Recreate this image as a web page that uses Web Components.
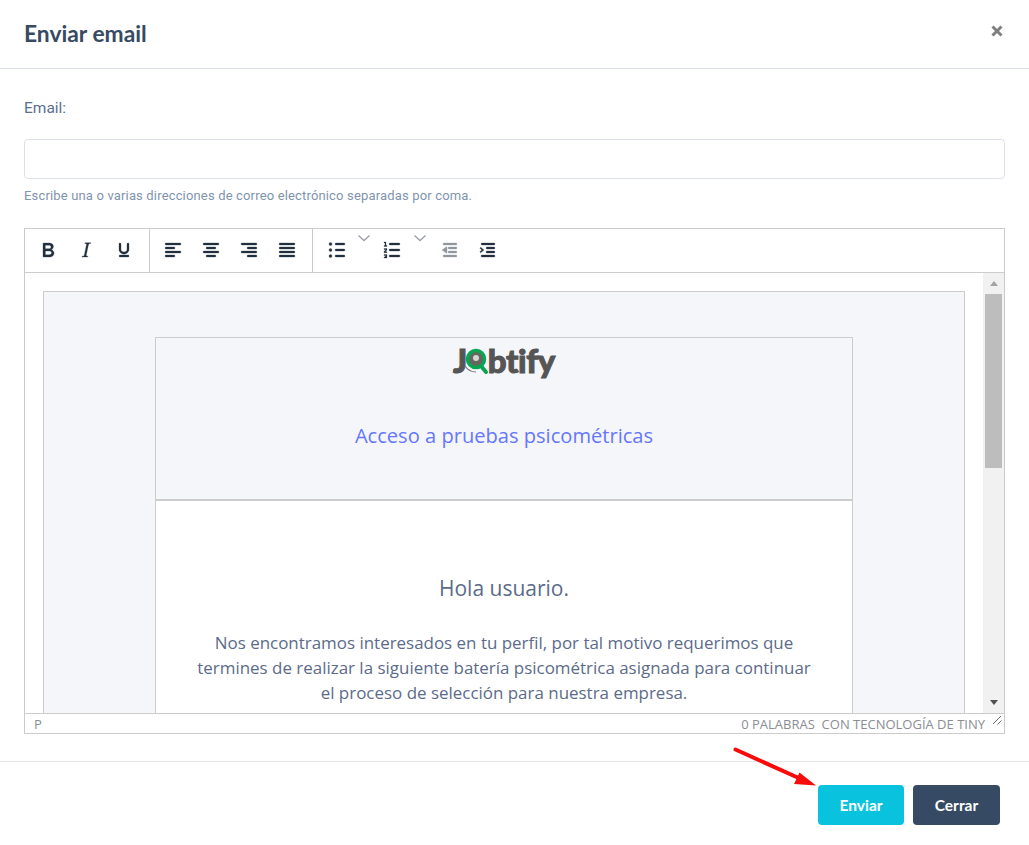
<!DOCTYPE html>
<html lang="es">
<head>
<meta charset="utf-8">
<title>Enviar email</title>
<style>
  html, body { margin: 0; background: #fff; }
  body { font-family: Roboto, "Liberation Sans", sans-serif; }
</style>
</head>
<body>
<email-modal>
  <span slot="title">Enviar email</span>
  <email-field></email-field>
  <rich-editor>
    <email-preview></email-preview>
  </rich-editor>
</email-modal>

<script>
const ICONS = {
  bold: '<path d="M7.800 19c-.3 0-.5 0-.6-.2l-.2-.5V5.700c0-.2 0-.4.2-.5l.6-.2h5c1.500 0 2.700.3 3.500 1 .7.6 1.100 1.400 1.100 2.500a3 3 0 0 1-.6 1.900c-.4.6-1 1-1.600 1.200.4.100.9.3 1.300.6s.8.7 1 1.200c.4.4.5 1 .5 1.600 0 1.300-.4 2.300-1.300 3-.8.7-2.100 1-3.800 1H7.800zm5-8.300c.6 0 1.200-.1 1.600-.5.4-.3.6-.7.6-1.300 0-1.100-.8-1.700-2.300-1.700H9.300v3.500h3.400zm.5 6c.7 0 1.300-.1 1.700-.4.4-.4.6-.9.6-1.500s-.2-1-.7-1.400c-.4-.3-1-.4-2-.4H9.400v3.800h4z"/>',
  italic: '<path d="M16.700 4.700l-.1.9h-.3c-.6 0-1 0-1.400.3-.3.3-.4.6-.5 1.100l-2.100 9.800v.6c0 .5.4.8 1.400.8h.2l-.2.8H8l.2-.8h.2c1.100 0 1.800-.5 2-1.500l2-9.800.1-.5c0-.6-.4-.8-1.400-.8h-.3l.2-.9h5.800z"/>',
  underline: '<path d="M16 5c.6 0 1 .4 1 1v5.500a4 4 0 0 1-.4 1.800l-1 1.400a5.300 5.300 0 0 1-5.500 1 5 5 0 0 1-1.600-1c-.5-.4-.8-.9-1.100-1.400a4 4 0 0 1-.4-1.800V6c0-.6.4-1 1-1s1 .4 1 1v5.500c0 .3 0 .6.2 1l.6.7a3.300 3.300 0 0 0 2.200.8 3.400 3.400 0 0 0 2.200-.8c.3-.2.4-.5.6-.8l.2-.9V6c0-.6.4-1 1-1zM8 17h8c.6 0 1 .4 1 1s-.4 1-1 1H8a1 1 0 0 1 0-2z"/>',
  left: '<path d="M5 5h14a1 1 0 0 1 0 2H5a1 1 0 1 1 0-2zm0 4h8a1 1 0 0 1 0 2H5a1 1 0 1 1 0-2zm0 8h8a1 1 0 0 1 0 2H5a1 1 0 0 1 0-2zm0-4h14a1 1 0 0 1 0 2H5a1 1 0 0 1 0-2z"/>',
  center: '<path d="M5 5h14a1 1 0 0 1 0 2H5a1 1 0 1 1 0-2zm3 4h8a1 1 0 0 1 0 2H8a1 1 0 1 1 0-2zm0 8h8a1 1 0 0 1 0 2H8a1 1 0 0 1 0-2zm-3-4h14a1 1 0 0 1 0 2H5a1 1 0 0 1 0-2z"/>',
  right: '<path d="M5 5h14a1 1 0 0 1 0 2H5a1 1 0 1 1 0-2zm6 4h8a1 1 0 0 1 0 2h-8a1 1 0 0 1 0-2zm0 8h8a1 1 0 0 1 0 2h-8a1 1 0 0 1 0-2zm-6-4h14a1 1 0 0 1 0 2H5a1 1 0 0 1 0-2z"/>',
  justify: '<path d="M5 5h14a1 1 0 0 1 0 2H5a1 1 0 1 1 0-2zm0 4h14a1 1 0 0 1 0 2H5a1 1 0 1 1 0-2zm0 4h14a1 1 0 0 1 0 2H5a1 1 0 0 1 0-2zm0 4h14a1 1 0 0 1 0 2H5a1 1 0 0 1 0-2z"/>',
  bullets: '<path d="M11 5h8a1 1 0 0 1 0 2h-8a1 1 0 0 1 0-2zm0 6h8a1 1 0 0 1 0 2h-8a1 1 0 0 1 0-2zm0 6h8a1 1 0 0 1 0 2h-8a1 1 0 0 1 0-2z"/><circle cx="5.500" cy="6" r="1.500"/><circle cx="5.500" cy="12" r="1.500"/><circle cx="5.500" cy="18" r="1.500"/>',
  numbers: '<path d="M10 17h9a1 1 0 0 1 0 2h-9a1 1 0 0 1 0-2zm0-6h9a1 1 0 0 1 0 2h-9a1 1 0 0 1 0-2zm0-6h9a1 1 0 0 1 0 2h-9a1 1 0 0 1 0-2zM6 4v3.500h1V8.500H4v-1h1V5H4V4h2zM4 10.500h3v1.600L5.300 13.700H7v1H4v-1.200L5.900 11.500H4v-1zM4 16.500h3v3.500H4v-1h2v-.3H5v-.7h1v-.5H4v-1z"/>',
  outdent: '<path d="M7 5h12a1 1 0 0 1 0 2H7a1 1 0 1 1 0-2zm5 4h7a1 1 0 0 1 0 2h-7a1 1 0 0 1 0-2zm0 4h7a1 1 0 0 1 0 2h-7a1 1 0 0 1 0-2zm-5 4h12a1 1 0 0 1 0 2H7a1 1 0 0 1 0-2zM8.500 9.400 10 8.800v6.400l-1.500-.6L5 12l3.500-2.600z"/>',
  indent: '<path d="M7 5h12a1 1 0 0 1 0 2H7a1 1 0 1 1 0-2zm5 4h7a1 1 0 0 1 0 2h-7a1 1 0 0 1 0-2zm0 4h7a1 1 0 0 1 0 2h-7a1 1 0 0 1 0-2zm-5 4h12a1 1 0 0 1 0 2H7a1 1 0 0 1 0-2zM5.700 9.300 9 12l-3.300 2.700-.9-1L7 12 4.800 10.300l.9-1z"/>'
}

customElements.define('email-modal', class extends HTMLElement {
  constructor () {
    super()
    this.attachShadow({ mode: 'open' })
    this.shadowRoot.innerHTML = `
      <style>
        :host { display: flex; flex-direction: column; width: 1029px; height: 845px; box-sizing: border-box; overflow: hidden; }
        header {
          height: 68px;
          flex: none;
          border-bottom: 1px solid #dbdfea;
          display: flex;
          align-items: center;
          justify-content: space-between;
          padding: 0 24px;
          color: #364a63;
          font: 700 22.800px/1.1 Lato, sans-serif;
        }
        header svg { display: block; margin: -6px 1px 0 0; }
        main { padding: 29px 24px 0; display: flex; flex-direction: column; height: 692px; box-sizing: border-box; flex: none; }
        footer {
          position: relative;
          flex: none;
          border-top: 1px solid #e5e5ec;
          height: 84px;
          box-sizing: border-box;
          padding: 23px 29px 0 0;
          display: flex;
          justify-content: flex-end;
          gap: 9px;
        }
        button {
          height: 40px;
          border: 0;
          border-radius: 4px;
          color: #fff;
          font: 700 15.500px Lato, sans-serif;
          padding: 0;
        }
        .send { width: 86px; background: #09c2de; }
        .close { width: 87px; background: #364a63; }
        .arrow { position: absolute; left: 730px; top: -16px; }
      </style>
      <header>
        <slot name="title"></slot>
        <svg width="14" height="14" viewBox="0 0 14 14"><path d="M2.500 2.500l9 9m0-9l-9 9" stroke="#7f7f7f" stroke-width="3"/></svg>
      </header>
      <main><slot></slot></main>
      <footer>
        <button class="send">Enviar</button>
        <button class="close">Cerrar</button>
        <svg class="arrow" width="92" height="46" viewBox="0 0 92 46">
          <path d="M5.500 3.500L72 33.500" stroke="#f80b0b" stroke-width="4" stroke-linecap="round"/>
          <path d="M86 39.500L64 38L69.500 26.500z" fill="#f80b0b"/>
        </svg>
      </footer>
    `
  }
})

customElements.define('email-field', class extends HTMLElement {
  constructor () {
    super()
    this.attachShadow({ mode: 'open' })
    this.shadowRoot.innerHTML = `
      <style>
        :host { display: block; font-family: Roboto, sans-serif; flex: none; }
        label { display: block; color: #5c6f8e; font-size: 15.500px; line-height: 21px; margin-bottom: 20px; }
        input { display: block; width: 100%; height: 40px; box-sizing: border-box; border: 1px solid #dbdfea; border-radius: 4px; outline: 0; background: #fff; }
        small { display: block; color: #8094ae; font-size: 13px; line-height: 17px; margin-top: 8px; letter-spacing: .16px; }
      </style>
      <label>Email:</label>
      <input type="text">
      <small>Escribe una o varias direcciones de correo electrónico separadas por coma.</small>
    `
  }
})

customElements.define('tool-button', class extends HTMLElement {
  constructor () {
    super()
    this.attachShadow({ mode: 'open' })
    const icon = ICONS[this.getAttribute('icon')]
    this.shadowRoot.innerHTML = `
      <style>
        :host { display: flex; align-items: center; justify-content: center; width: var(--w, 38px); height: 43px; flex: none; }
        svg { display: block; fill: #222f3e; stroke: #222f3e; stroke-width: .3; margin-top: -1px; }
        :host([disabled]) svg { opacity: .5; }
      </style>
      <svg width="24" height="24" viewBox="0 0 24 24">${icon}</svg>
    `
  }
})

customElements.define('tool-chevron', class extends HTMLElement {
  constructor () {
    super()
    this.attachShadow({ mode: 'open' })
    this.shadowRoot.innerHTML = `
      <style>
        :host { display: block; flex: none; width: 18px; height: 43px; }
        svg { display: block; margin: 5px 0 0 2px; }
      </style>
      <svg width="14" height="8" viewBox="0 0 14 8"><path d="M1.500 1.500L7 6.500l5.500-5" fill="none" stroke="#9a9fa6" stroke-width="1.300"/></svg>
    `
  }
})

customElements.define('rich-editor', class extends HTMLElement {
  constructor () {
    super()
    this.attachShadow({ mode: 'open' })
    this.shadowRoot.innerHTML = `
      <style>
        :host { display: flex; flex-direction: column; height: 506px; flex: none; margin-top: 24px; border: 1px solid #ccc; box-sizing: border-box; font-family: "Open Sans", sans-serif; }
        .toolbar { display: flex; height: 43px; flex: none; border-bottom: 1px solid #ccc; }
        .group { display: flex; padding: 0 6px 0 4px; border-right: 1px solid #ccc; }
        .group.plain { border-right: 0; padding-left: 6px; }
        .group.plain tool-button { --w: 36px; }
        .doc { flex: 1; min-height: 0; display: flex; }
        .view { flex: 1; min-width: 0; overflow: hidden; padding: 18px 18px 0; }
        .bar { flex: none; width: 21px; background: #f1f1f1; display: flex; flex-direction: column; align-items: center; }
        .bar i { display: block; width: 0; height: 0; border: 4px solid transparent; }
        .up { border-bottom: 5px solid #a3a3a3 !important; border-top: 0 !important; margin-top: 8px; }
        .thumb { width: 17px; height: 174px; background: #bdbdbd; margin-top: 8px; }
        .down { border-top: 5px solid #505050 !important; border-bottom: 0 !important; margin-top: auto; margin-bottom: 8px; }
        .status { flex: none; height: 20px; box-sizing: border-box; border-top: 1px solid #ccc; padding: 1px 19px 0 9px; display: flex; justify-content: space-between; align-items: center; color: #8a8d93; font-size: 13px; position: relative; }
        .status svg { position: absolute; right: 1px; top: 1px; }
      </style>
      <div class="toolbar">
        <div class="group">
          <tool-button icon="bold"></tool-button>
          <tool-button icon="italic"></tool-button>
          <tool-button icon="underline"></tool-button>
        </div>
        <div class="group">
          <tool-button icon="left"></tool-button>
          <tool-button icon="center"></tool-button>
          <tool-button icon="right"></tool-button>
          <tool-button icon="justify"></tool-button>
        </div>
        <div class="group plain">
          <tool-button icon="bullets"></tool-button>
          <tool-chevron></tool-chevron>
          <tool-button icon="numbers" style="margin-left:1px"></tool-button>
          <tool-chevron style="margin-left:1px"></tool-chevron>
          <tool-button icon="outdent" style="margin-left:1px;--w:38px" disabled></tool-button>
          <tool-button icon="indent" style="--w:38px"></tool-button>
        </div>
      </div>
      <div class="doc">
        <div class="view"><slot></slot></div>
        <div class="bar"><i class="up"></i><div class="thumb"></div><i class="down"></i></div>
      </div>
      <div class="status">
        <span>P</span>
        <span>0 PALABRAS&nbsp; CON TECNOLOGÍA DE TINY</span>
        <svg width="11" height="11" viewBox="0 0 11 11"><path d="M1 9L9 1M5.500 9.500L9.500 5.500" stroke="#6b6b6b" fill="none"/></svg>
      </div>
    `
  }
})

customElements.define('email-preview', class extends HTMLElement {
  constructor () {
    super()
    this.attachShadow({ mode: 'open' })
    this.shadowRoot.innerHTML = `
      <style>
        :host { display: block; border: 1px solid #ccc; background: #f5f6fa; padding: 45px 111px 0; height: 600px; box-sizing: border-box; font-family: "Open Sans", sans-serif; }
        .card { border: 1px solid #ccc; }
        .head { height: 161px; border-bottom: 2px solid #ccc; display: flex; flex-direction: column; align-items: center; }
        .logo { display: flex; align-items: center; height: 34px; margin-top: 5px; color: #555; font: 900 33px/34px Lato, sans-serif; letter-spacing: -.4px; -webkit-text-stroke: 1px #555; }
        .logo svg { margin: 2px -2px 0 -3px; }
        .head p { margin: 44px 0 0; color: #6576ff; font-size: 20.100px; line-height: 30px; }
        .body { background: #fff; padding: 72px 40px 0; height: 400px; text-align: center; color: #5b6b8a; }
        h2 { margin: 0; font-weight: 400; font-size: 21px; line-height: 30px; }
        .body p { margin: 27px 0 0; font-size: 16.950px; line-height: 25px; }
      </style>
      <div class="card">
        <div class="head">
          <div class="logo">
            <span>J</span>
            <svg width="26" height="30" viewBox="0 0 26 30">
              <path d="M1 20q4 6 11 6" fill="none" stroke="#777" stroke-width="1.200"/>
              <path d="M17 20l5 6" stroke="#0aa552" stroke-width="4" stroke-linecap="round"/>
              <circle cx="12" cy="13" r="8.500" fill="#66665e" stroke="#0aa552" stroke-width="3.500"/>
              <circle cx="12" cy="12" r="3" fill="#d5d5d5"/>
            </svg>
            <span>btify</span>
          </div>
          <p>Acceso a pruebas psicométricas</p>
        </div>
        <div class="body">
          <h2>Hola usuario.</h2>
          <p>Nos encontramos interesados en tu perfil, por tal motivo requerimos que termines de realizar la siguiente batería psicométrica asignada para continuar el proceso de selección para nuestra empresa.</p>
        </div>
      </div>
    `
  }
})
</script>
</body>
</html>
